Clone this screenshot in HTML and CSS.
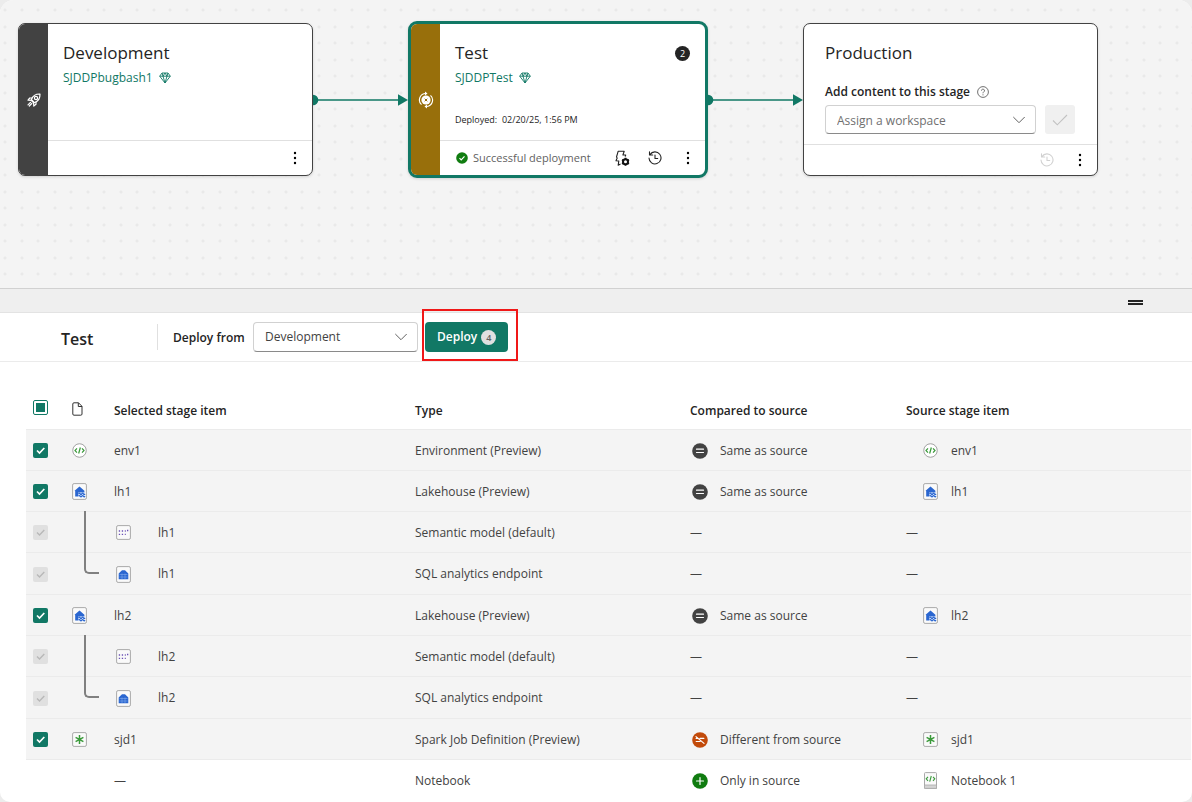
FILE: index.html
```html
<!DOCTYPE html>
<html lang="en">
<head>
<meta charset="utf-8">
<title>Deployment pipeline</title>
<link rel="stylesheet" href="styles.css">
</head>
<body>
<svg class="sprite" aria-hidden="true">
  <symbol id="i-gem" viewBox="0 0 12 12"><path d="M3 1h6l2.300 3.200L6 11 .7 4.200zM.7 4.200h10.600M3 1l1 3.200L6 11l2-6.800L9 1M4 4.200 6 1l2 3.200" fill="none" stroke="currentColor" stroke-width=".9" stroke-linejoin="round"/></symbol>
  <symbol id="i-more" viewBox="0 0 4 14"><circle cx="2" cy="2" r="1.200"/><circle cx="2" cy="7" r="1.200"/><circle cx="2" cy="12" r="1.200"/></symbol>
  <symbol id="i-history" viewBox="0 0 14 14"><path d="M2 3.600A6 6 0 1 1 1 7M1.500.8v3.200h3.200M7 4v3.500h2.700" fill="none" stroke="currentColor" stroke-width="1.100" stroke-linecap="round" stroke-linejoin="round"/></symbol>
  <symbol id="i-chevron" viewBox="0 0 12 8"><path d="m.6 1.300 5.400 5.400 5.400-5.400" fill="none" stroke="currentColor" stroke-linecap="round"/></symbol>
  <symbol id="i-env" viewBox="0 0 16 16"><circle cx="8" cy="8" r="7.200" fill="#fff" stroke="#9b9b9b"/><path d="M5.300 5.800 3.200 8l2.100 2.200M10.700 5.800 12.800 8l-2.100 2.200M8.900 4.800 7.100 11.200" fill="none" stroke="#3a9a3a" stroke-width="1.300"/></symbol>
  <symbol id="i-lake" viewBox="0 0 15 17"><rect x=".6" y=".6" width="13.800" height="15.800" rx="1.500" fill="#fafafa" stroke="#a9a9a9"/><path d="M2.600 7.800 7.500 3.600l4.900 4.200v2.400H8L6.500 13.500H3.200V8.300z" fill="#2a66d0"/><path d="M6.300 9.400h6.700v4.800H6.300z" fill="#e4edfb"/><path d="M6.600 10.800q.8-1.200 1.600 0t1.600 0 1.600 0 1.600 0M6.600 13.200q.8-1.200 1.600 0t1.600 0 1.600 0 1.600 0" fill="none" stroke="#2a66d0" stroke-width="1.200"/></symbol>
  <symbol id="i-sql" viewBox="0 0 15 17"><rect x=".6" y=".6" width="13.800" height="15.800" rx="1.500" fill="#fafafa" stroke="#a9a9a9"/><path d="M2.700 7.500 6 4.200h3l3.300 3.300v5.700H2.700z" fill="#2a66d0"/><path d="M3.500 8.500h8M3.500 11h8M6 7.500v5.700M9 7.500v5.700" stroke="#8fb4f2" stroke-width=".5"/></symbol>
  <symbol id="i-model" viewBox="0 0 15 15"><rect x=".6" y=".6" width="13.800" height="13.800" rx="1.500" fill="#fafafa" stroke="#a9a9a9"/><path d="M2.800 6h1.300m1.700 0h1.300m1.700 0h1M11 5.500h1.300M2.800 9.300h1.300m1.700 0h1.300m1.700 0h1" stroke="#6b52b5" stroke-width="1.300"/></symbol>
  <symbol id="i-spark" viewBox="0 0 15 15"><rect x=".6" y=".6" width="13.800" height="13.800" rx="1.500" fill="#fafafa" stroke="#a9a9a9"/><path d="M7.500 3v9M3.600 5.300l7.800 4.400M11.400 5.300 3.600 9.700" stroke="#3a9a3a" stroke-width="1.500"/></symbol>
  <symbol id="i-notebook" viewBox="0 0 15 17"><path d="M1.500 1.500q0-.9.900-.9h10.200q.9 0 .9.900v14.900H2.400q-.9 0-.9-.9z" fill="#fafafa" stroke="#a9a9a9"/><path d="M1.500 13h12v3.400h-12z" fill="#d4d4d4" stroke="#a9a9a9" stroke-width=".8"/><path d="M5 4.800 3.200 6.800 5 8.800M10 4.800l1.800 2L10 8.800M8.300 4 6.700 9.600" fill="none" stroke="#3a9a3a" stroke-width="1.100"/></symbol>
  <symbol id="i-same" viewBox="0 0 16 16"><circle cx="8" cy="8" r="7.800" fill="#424242"/><path d="M4.500 6.200h7M4.500 9.500h7" stroke="#fff" stroke-width="1.200" stroke-linecap="round"/></symbol>
  <symbol id="i-diff" viewBox="0 0 16 16"><circle cx="8" cy="8" r="7.800" fill="#c24a0a"/><path d="M4 4.600l8 6.800M8 6.400h3.800M4.200 6.400h1.600M4.200 9.500h3.900" stroke="#fff" stroke-width="1.200" stroke-linecap="round"/></symbol>
  <symbol id="i-only" viewBox="0 0 16 16"><circle cx="8" cy="8" r="7.800" fill="#107c10"/><path d="M8 4.500v7M4.500 8h7" stroke="#fff" stroke-width="1.200" stroke-linecap="round"/></symbol>
  <symbol id="i-link" viewBox="0 0 95 12"><circle cx="0" cy="6" r="5.300" fill="#117865"/><path d="M0 6h88" stroke="#117865" stroke-width="1.500"/><path d="M85 0.300 95 6l-10 5.700z" fill="#117865"/></symbol>
</svg>

<div class="window">
  <main class="canvas">
    <article class="stage">
      <div class="stage-side dark">
        <svg width="14" height="14" viewBox="0 0 14 14"><g fill="none" stroke="#fff" stroke-width="1.200" stroke-linejoin="round" stroke-linecap="round"><path d="M4.300 6.500C5.800 2.800 8.500.8 13 1c.2 4.500-1.800 7.200-5.500 8.700z"/><circle cx="9" cy="5" r="1.600"/><path d="M5 5H2.800L1 7.200l3.300.2M9 9v2.200L6.800 13l-.3-3.300M3.500 9.300 1 11.800M4.800 10.500l-2.500 2.500"/></g><path d="m4.500 6.500 3 3-1.500.5-2-2z" fill="#fff"/></svg>
      </div>
      <div class="stage-main">
        <div class="stage-body">
          <h2>Development</h2>
          <a class="workspace" href="#">SJDDPbugbash1 <svg width="12" height="12"><use href="#i-gem"/></svg></a>
        </div>
        <footer class="stage-foot">
          <button class="icon-btn" aria-label="More options"><svg width="4" height="14"><use href="#i-more"/></svg></button>
        </footer>
      </div>
    </article>
    <svg class="connector" width="95" height="12"><use href="#i-link"/></svg>
    <article class="stage selected">
      <div class="stage-side amber">
        <svg width="16" height="18" viewBox="0 0 16 18"><circle cx="8" cy="9" r="4.600" fill="#fff"/><path d="m6.700 7.700 2.600 2.600m0-2.600-2.600 2.600" stroke="#986f0b"/><path d="M7 2.500A6.500 6.500 0 0 0 3.500 13.700M9 15.500A6.500 6.500 0 0 0 12.500 4.300" fill="none" stroke="#fff" stroke-width="1.100"/><path d="m7 .5 2.500 2L7 4.500zM9 13.500v4l-2.500-2z" fill="#fff"/></svg>
      </div>
      <div class="stage-main">
        <div class="stage-body">
          <div class="stage-title"><h2>Test</h2><span class="count">2</span></div>
          <a class="workspace" href="#">SJDDPTest <svg width="12" height="12"><use href="#i-gem"/></svg></a>
          <p class="deployed">Deployed:&nbsp; 02/20/25, 1:56 PM</p>
        </div>
        <footer class="stage-foot">
          <span class="status"><svg width="12" height="12" viewBox="0 0 12 12"><circle cx="6" cy="6" r="5.800" fill="#107c10"/><path d="m3.500 6.200 1.700 1.700 3.300-3.500" fill="none" stroke="#fff" stroke-width="1.200"/></svg>Successful deployment</span>
          <button class="icon-btn" aria-label="Deployment rules"><svg width="16" height="16" viewBox="0 0 16 16"><path d="M6.500 14 4.200 15.200l.6-4.200-2.800-.3 1.200-2.700L2.500 7l1.700-5.800h6L8.900 5h2.800l-.5 1.600" fill="none" stroke="#242424" stroke-width="1.100" stroke-linejoin="round"/><circle cx="11.500" cy="11.800" r="2.500" fill="none" stroke="#111" stroke-width="2"/><path d="M11.500 7.800v1.500m0 5v1.500M8 9.800l1.300.7m4.400 2.600 1.300.7M8 13.800l1.300-.7m4.400-2.600 1.300-.7" stroke="#111" stroke-width="1.800"/></svg></button>
          <button class="icon-btn" aria-label="Deployment history"><svg width="14" height="14"><use href="#i-history"/></svg></button>
          <button class="icon-btn" aria-label="More options"><svg width="4" height="14"><use href="#i-more"/></svg></button>
        </footer>
      </div>
    </article>
    <svg class="connector" width="95" height="12"><use href="#i-link"/></svg>
    <article class="stage empty">
      <div class="stage-main">
        <div class="stage-body">
          <h2>Production</h2>
          <div class="assign-label"><label for="workspace">Add content to this stage</label>
            <svg width="12" height="12" viewBox="0 0 12 12"><circle cx="6" cy="6" r="5.400" fill="none" stroke="#616161" stroke-width=".9"/><path d="M4.500 4.700a1.500 1.500 0 1 1 2.300 1.200Q6 6.400 6 7.300" fill="none" stroke="#616161" stroke-width=".9"/><circle cx="6" cy="8.800" r=".6" fill="#616161"/></svg>
          </div>
          <div class="assign">
            <div class="select"><select id="workspace" class="placeholder"><option>Assign a workspace</option></select><svg width="12" height="8"><use href="#i-chevron"/></svg></div>
            <button class="confirm" aria-label="Assign" disabled><svg width="16" height="12" viewBox="0 0 16 12"><path d="m1 6.500 4.300 4.300L15 1" fill="none" stroke="#c2c2c2" stroke-width="1.100"/></svg></button>
          </div>
        </div>
        <footer class="stage-foot">
          <button class="icon-btn" aria-label="Deployment history" disabled><svg width="14" height="14"><use href="#i-history"/></svg></button>
          <button class="icon-btn" aria-label="More options"><svg width="4" height="14"><use href="#i-more"/></svg></button>
        </footer>
      </div>
    </article>
  </main>

  <div class="splitter"><span class="grip"></span></div>

  <section class="toolbar">
    <h1>Test</h1>
    <div class="deploy-from">
      <label for="source">Deploy from</label>
      <div class="select"><select id="source"><option>Development</option></select><svg width="12" height="8"><use href="#i-chevron"/></svg></div>
      <div class="highlight"><button class="deploy">Deploy <span>4</span></button></div>
    </div>
  </section>

  <table class="items">
    <colgroup><col class="c-check"><col class="c-icon"><col class="c-name"><col class="c-type"><col class="c-compare"><col></colgroup>
    <thead>
      <tr>
        <th><input type="checkbox" class="mixed" aria-label="Select all"></th>
        <th><svg class="doc" width="11" height="14" viewBox="0 0 11 14"><path d="M2 .8h4.500l3.500 3.500v7.700q0 1.200-1.200 1.200H2Q.8 13.200.8 12V2Q.8.8 2 .8zM6.300.8v3.700H10" fill="none" stroke="#333"/></svg></th>
        <th>Selected stage item</th><th>Type</th><th>Compared to source</th><th>Source stage item</th>
      </tr>
    </thead>
    <tbody>
      <tr><td><input type="checkbox" checked aria-label="env1"></td><td><svg class="kind" width="15" height="15"><use href="#i-env"/></svg></td><td>env1</td><td>Environment (Preview)</td>
        <td><span class="compare"><svg width="16" height="16"><use href="#i-same"/></svg>Same as source</span></td><td><span class="source"><svg width="15" height="15"><use href="#i-env"/></svg>env1</span></td></tr>
      <tr><td><input type="checkbox" checked aria-label="lh1"></td><td><svg class="kind" width="15" height="17"><use href="#i-lake"/></svg></td><td>lh1</td><td>Lakehouse (Preview)</td>
        <td><span class="compare"><svg width="16" height="16"><use href="#i-same"/></svg>Same as source</span></td><td><span class="source"><svg width="15" height="17"><use href="#i-lake"/></svg>lh1</span></td></tr>
      <tr><td><input type="checkbox" checked disabled aria-label="lh1 semantic model"></td><td class="tree"><span class="branch"></span></td><td><span class="child"><svg width="15" height="15"><use href="#i-model"/></svg>lh1</span></td><td>Semantic model (default)</td><td>—</td><td>—</td></tr>
      <tr class="group-end"><td><input type="checkbox" checked disabled aria-label="lh1 endpoint"></td><td class="tree"><span class="branch last"></span></td><td><span class="child"><svg width="15" height="17"><use href="#i-sql"/></svg>lh1</span></td><td>SQL analytics endpoint</td><td>—</td><td>—</td></tr>
      <tr><td><input type="checkbox" checked aria-label="lh2"></td><td><svg class="kind" width="15" height="17"><use href="#i-lake"/></svg></td><td>lh2</td><td>Lakehouse (Preview)</td>
        <td><span class="compare"><svg width="16" height="16"><use href="#i-same"/></svg>Same as source</span></td><td><span class="source"><svg width="15" height="17"><use href="#i-lake"/></svg>lh2</span></td></tr>
      <tr><td><input type="checkbox" checked disabled aria-label="lh2 semantic model"></td><td class="tree"><span class="branch"></span></td><td><span class="child"><svg width="15" height="15"><use href="#i-model"/></svg>lh2</span></td><td>Semantic model (default)</td><td>—</td><td>—</td></tr>
      <tr class="group-end"><td><input type="checkbox" checked disabled aria-label="lh2 endpoint"></td><td class="tree"><span class="branch last"></span></td><td><span class="child"><svg width="15" height="17"><use href="#i-sql"/></svg>lh2</span></td><td>SQL analytics endpoint</td><td>—</td><td>—</td></tr>
      <tr><td><input type="checkbox" checked aria-label="sjd1"></td><td><svg class="kind" width="15" height="15"><use href="#i-spark"/></svg></td><td>sjd1</td><td>Spark Job Definition (Preview)</td>
        <td><span class="compare"><svg width="16" height="16"><use href="#i-diff"/></svg>Different from source</span></td><td><span class="source"><svg width="15" height="15"><use href="#i-spark"/></svg>sjd1</span></td></tr>
      <tr class="unselected"><td></td><td></td><td>—</td><td>Notebook</td>
        <td><span class="compare"><svg width="16" height="16"><use href="#i-only"/></svg>Only in source</span></td><td><span class="source"><svg width="15" height="17"><use href="#i-notebook"/></svg>Notebook 1</span></td></tr>
    </tbody>
  </table>
</div>
</body>
</html>
```

FILE: styles.css
```css
:root {
  --green: #117865;
  --ink: #242424;
  --text: #424242;
}
* { box-sizing: border-box; }
body {
  margin: 0;
  background: #ececec;
  color: var(--text);
  font: 12px/20px "Open Sans", "Noto Sans", sans-serif;
}
h1, h2, p { margin: 0; font-weight: 400; }
svg { display: block; flex: none; }
button, select { font: inherit; color: inherit; }
.sprite { position: absolute; width: 0; height: 0; }
.window {
  min-height: 100vh;
  background: #fff;
  border-radius: 14px 14px 10px 10px;
  overflow: hidden;
}

/* Pipeline canvas */
.canvas {
  display: flex;
  align-items: center;
  padding: 21px 18px 110px;
  background-color: #f4f4f4;
  background-image:
    radial-gradient(circle at 5px 10px, #e9e9e9 1px, transparent 2px),
    radial-gradient(circle at 22px 10px, #e9e9e9 1px, transparent 2px),
    radial-gradient(circle at 5px 27px, #e9e9e9 1px, transparent 2px),
    radial-gradient(circle at 22px 27px, #e9e9e9 1px, transparent 2px);
  background-size: 33px 33px;
}
.stage {
  display: flex;
  flex: none;
  width: 295px;
  min-height: 153px;
  background: #fff;
  border: 1px solid var(--text);
  border-radius: 7px;
  overflow: hidden;
  box-shadow: 0 1px 3px rgba(0, 0, 0, .14);
}
.stage.selected {
  width: 300px;
  min-height: 157px;
  border: 3px solid var(--green);
  border-radius: 9px;
}
.stage-side {
  display: grid;
  place-items: center;
  width: 29px;
}
.dark { background: var(--text); }
.amber { background: #986f0b; }
.stage-main { display: flex; flex: 1; flex-direction: column; }
.stage-body { flex: 1; padding: 16px 15px 0; }
.empty .stage-body { padding: 16px 22px 9px 21px; }
.stage-body h2 { color: var(--ink); font-size: 17px; line-height: 26px; }
.stage-title { display: flex; align-items: center; justify-content: space-between; }
.count {
  width: 15px;
  height: 15px;
  border-radius: 50%;
  background: var(--ink);
  color: #fff;
  font-size: 9px;
  line-height: 15px;
  text-align: center;
}
.workspace {
  display: flex;
  align-items: center;
  gap: 6px;
  color: var(--green);
  line-height: 24px;
  text-decoration: none;
}
.deployed { margin-top: 20px; color: var(--ink); font-size: 9px; }
.stage-foot {
  display: flex;
  align-items: center;
  justify-content: flex-end;
  gap: 17px;
  height: 35px;
  padding: 0 9px 0 16px;
  border-top: 1px solid #e0e0e0;
}
.empty .stage-foot { height: 31px; }
.status {
  display: flex;
  align-items: center;
  gap: 5px;
  margin-right: auto;
  color: #616161;
  font-size: 11px;
  white-space: nowrap;
}
.icon-btn {
  display: grid;
  place-items: center;
  width: 16px;
  padding: 0;
  border: 0;
  background: none;
  color: var(--ink);
}
.icon-btn:disabled { color: #d1d1d1; }
.assign-label {
  display: flex;
  align-items: center;
  gap: 7px;
  margin-top: 16px;
  color: var(--ink);
  font-weight: 600;
}
.assign { display: flex; gap: 9px; margin-top: 3px; }
.confirm {
  display: grid;
  place-items: center;
  width: 30px;
  height: 29px;
  padding: 0;
  border: 0;
  border-radius: 3px;
  background: #f0f0f0;
}

/* Drop-down */
.select { display: grid; align-items: center; }
.select > * { grid-area: 1 / 1; }
.select svg { justify-self: end; margin-right: 11px; color: #616161; pointer-events: none; }
.select select {
  appearance: none;
  height: 30px;
  padding: 0 11px;
  border: 1px solid #d1d1d1;
  border-bottom-color: #8a8a8a;
  border-radius: 4px;
  background: #fff;
}
.assign .select { flex: 1; }
.select .placeholder { height: 29px; padding-top: 2px; color: #707070; }

/* Splitter */
.splitter {
  display: flex;
  align-items: center;
  justify-content: flex-end;
  height: 25px;
  padding: 3px 49px 0 0;
  border-top: 1px solid #d1d1d1;
  border-bottom: 1px solid #e3e3e3;
  background: #efefef;
}
.grip {
  width: 15px;
  height: 5px;
  border: solid var(--ink);
  border-width: 2px 0;
}

/* Toolbar */
.toolbar {
  display: flex;
  align-items: center;
  height: 49px;
  padding-left: 61px;
  border-bottom: 1px solid #ebebeb;
}
.toolbar h1 {
  width: 96px;
  padding-top: 3px;
  color: var(--ink);
  font-size: 16px;
  font-weight: 600;
}
.deploy-from {
  display: flex;
  align-items: center;
  height: 26px;
  padding-left: 15px;
  border-left: 1px solid #e0e0e0;
}
.deploy-from label { width: 80px; padding-top: 2px; color: var(--ink); font-weight: 600; }
.deploy-from select { width: 165px; color: var(--text); }
.highlight { position: relative; margin-left: 7px; }
.highlight::after {
  content: "";
  position: absolute;
  inset: -13px -10px -9px -3px;
  border: 2px solid #f01818;
  pointer-events: none;
}
.deploy {
  display: flex;
  align-items: center;
  gap: 4px;
  height: 30px;
  padding: 0 12px;
  border: 0;
  border-radius: 4px;
  background: var(--green);
  color: #fff;
  font-weight: 600;
}
.deploy span {
  width: 15px;
  height: 15px;
  border-radius: 50%;
  background: #e0e0e0;
  color: #616161;
  font-size: 9px;
  line-height: 15px;
}

/* Item list */
.items {
  width: calc(100% - 27px);
  margin-left: 26px;
  border-spacing: 0;
  table-layout: fixed;
}
.c-check { width: 36px; }
.c-icon { width: 52px; }
.c-name { width: 301px; }
.c-type { width: 275px; }
.c-compare { width: 216px; }
th, td { padding: 0; text-align: left; }
th {
  height: 67px;
  padding-bottom: 8px;
  color: var(--ink);
  font-weight: 600;
  vertical-align: bottom;
}
th:first-child, td:first-child { padding-left: 7px; }
td { height: 41px; padding-top: 2px; }
.group-end td { height: 42px; }
tbody tr { background: #f4f4f4; box-shadow: inset 0 1px #ebebeb; }
tbody .unselected { background: #fff; }
.doc { margin: 0 0 5px 10px; }
.kind { margin-left: 10px; }
.child, .compare, .source { display: flex; align-items: center; }
.child { gap: 27px; padding-left: 2px; }
.compare { gap: 12px; padding-left: 2px; }
.source { gap: 13px; padding-left: 17px; }
td.tree { padding: 0 0 0 22px; vertical-align: top; }
.branch {
  display: block;
  width: 15px;
  height: 41px;
  border-left: 2px solid #808080;
}
.branch.last {
  height: 22px;
  border-bottom: 2px solid #808080;
  border-bottom-left-radius: 5px;
}
input[type="checkbox"] {
  appearance: none;
  display: block;
  width: 15px;
  height: 15px;
  margin: 0;
  border-radius: 2px;
  background: var(--green) url("data:image/svg+xml,%3Csvg xmlns='http://www.w3.org/2000/svg' viewBox='0 0 15 15'%3E%3Cpath d='M4 7.500 6.500 10 11.300 5' fill='none' stroke='%23fff' stroke-width='1.700'/%3E%3C/svg%3E");
}
input[type="checkbox"]:disabled {
  background: #e0e0e0 url("data:image/svg+xml,%3Csvg xmlns='http://www.w3.org/2000/svg' viewBox='0 0 15 15'%3E%3Cpath d='M4 7.500 6.500 10 11.300 5' fill='none' stroke='%23b8b8b8' stroke-width='1.400'/%3E%3C/svg%3E");
}
input[type="checkbox"].mixed {
  margin-bottom: 6px;
  padding: 2px;
  border: 1px solid var(--green);
  background: var(--green) content-box;
}
```
